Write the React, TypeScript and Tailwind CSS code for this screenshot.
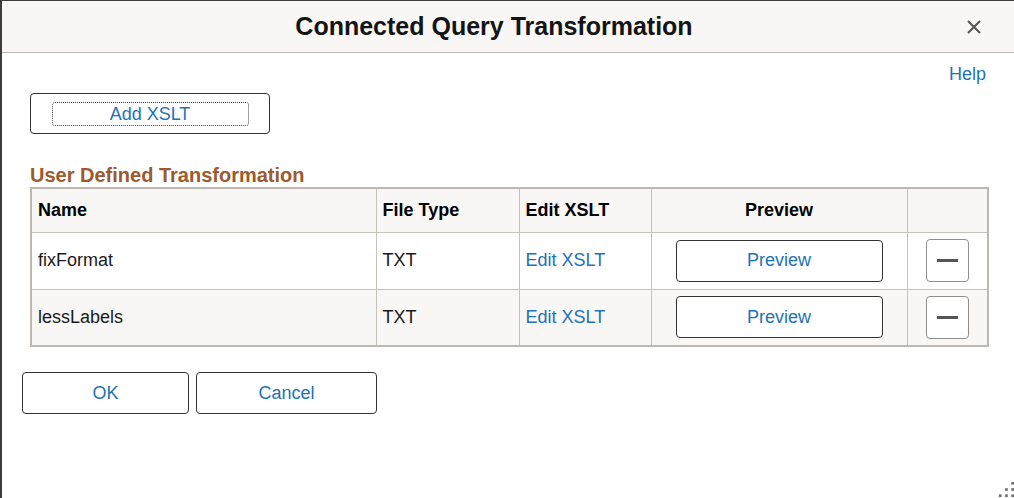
import type { ReactNode } from "react";

const font = { fontFamily: '"Liberation Sans", Arial, sans-serif' };

type Row = { name: string; fileType: string };

const rows: Row[] = [
  { name: "fixFormat", fileType: "TXT" },
  { name: "lessLabels", fileType: "TXT" },
];

function OutlineButton({ children, className }: { children: ReactNode; className: string }) {
  return (
    <button
      className={`flex items-center justify-center rounded-[4px] border border-[#333] bg-white text-[18px] text-[#1d72b8] ${className}`}
    >
      {children}
    </button>
  );
}

function MinusButton() {
  return (
    <button className="flex h-[43px] w-[43px] items-center justify-center rounded-[4px] border border-[#8e8e8e] bg-white">
      <span className="block h-[3px] w-[21px] bg-[#555]" />
    </button>
  );
}

function ResizeGrip() {
  // bottom-right corner grip, dots drawn as small squares
  const dots = [
    [12, 0],
    [5, 7],
    [12, 7],
    [-2, 14],
    [5, 14],
    [12, 14],
  ];
  return (
    <svg className="absolute bottom-0 right-0" width="16" height="17" viewBox="-3 0 18 17">
      {dots.map(([x, y], i) => (
        <rect key={i} x={x} y={y} width="3" height="3" fill="#6f6f6f" />
      ))}
    </svg>
  );
}

export default function App() {
  return (
    <div
      className="relative h-[498px] w-[1014px] overflow-hidden border-t border-l-2 border-[#3f3b38] bg-white text-black"
      style={font}
    >
      {/* Title bar */}
      <div className="relative flex h-[52px] items-center justify-center border-b border-[#bfbab3] bg-[#f8f7f5] pr-[28px]">
        <h1 className="text-[25px] font-bold leading-none text-[#141414]">Connected Query Transformation</h1>
        <button className="absolute right-[31px] top-[17px] text-[#555]" title="Close">
          <svg width="18" height="18" viewBox="0 0 18 18">
            <path d="M3 3 L15 15 M15 3 L3 15" stroke="#555" strokeWidth="2" />
          </svg>
        </button>
      </div>

      {/* Body */}
      <div className="flex flex-col">
        <div className="flex justify-end pr-[28px] pt-[11px]">
          <a className="text-[18px] leading-[21px] text-[#1d72b8]">Help</a>
        </div>

        <div className="ml-[28px] mt-[8px] flex h-[41px] w-[240px] items-center justify-center rounded-[4px] border border-[#333]">
          <button className="h-[24px] w-[197px] rounded-[3px] border border-dotted border-[#444] text-[18px] leading-none text-[#1d72b8]">
            Add XSLT
          </button>
        </div>

        <h2 className="ml-[28px] mt-[30px] text-[20px] font-bold leading-[23px] text-[#9c5a2e]">
          User Defined Transformation
        </h2>

        <table className="ml-[28px] w-[959px] border-collapse border-2 border-[#bdb8b1] text-[18px]">
          <colgroup>
            <col className="w-[345px]" />
            <col className="w-[143px]" />
            <col className="w-[132px]" />
            <col className="w-[256px]" />
            <col />
          </colgroup>
          <thead>
            <tr className="h-[44px] bg-[#f8f7f5]">
              <th className="border border-[#c6c2bc] px-[6px] text-left font-bold">Name</th>
              <th className="border border-[#c6c2bc] px-[6px] text-left font-bold">File Type</th>
              <th className="border border-[#c6c2bc] px-[6px] text-left font-bold">Edit XSLT</th>
              <th className="border border-[#c6c2bc] px-[6px] text-center font-bold">Preview</th>
              <th className="border border-[#c6c2bc]" />
            </tr>
          </thead>
          <tbody>
            {rows.map((r, i) => (
              <tr key={r.name} className={`h-[57px] ${i % 2 === 1 ? "bg-[#f8f7f5]" : "bg-white"}`}>
                <td className="border border-[#c6c2bc] px-[6px] text-[#1a1a1a]">{r.name}</td>
                <td className="border border-[#c6c2bc] px-[6px] text-[#1a1a1a]">{r.fileType}</td>
                <td className="border border-[#c6c2bc] px-[6px]">
                  <a className="text-[#1d72b8]">Edit XSLT</a>
                </td>
                <td className="border border-[#c6c2bc]">
                  <div className="flex justify-center">
                    <OutlineButton className="h-[42px] w-[207px]">Preview</OutlineButton>
                  </div>
                </td>
                <td className="border border-[#c6c2bc]">
                  <div className="flex justify-center">
                    <MinusButton />
                  </div>
                </td>
              </tr>
            ))}
          </tbody>
        </table>

        <div className="ml-[20px] mt-[25px] flex gap-[7px]">
          <OutlineButton className="h-[42px] w-[167px]">OK</OutlineButton>
          <OutlineButton className="h-[42px] w-[181px]">Cancel</OutlineButton>
        </div>
      </div>

      <ResizeGrip />
    </div>
  );
}
